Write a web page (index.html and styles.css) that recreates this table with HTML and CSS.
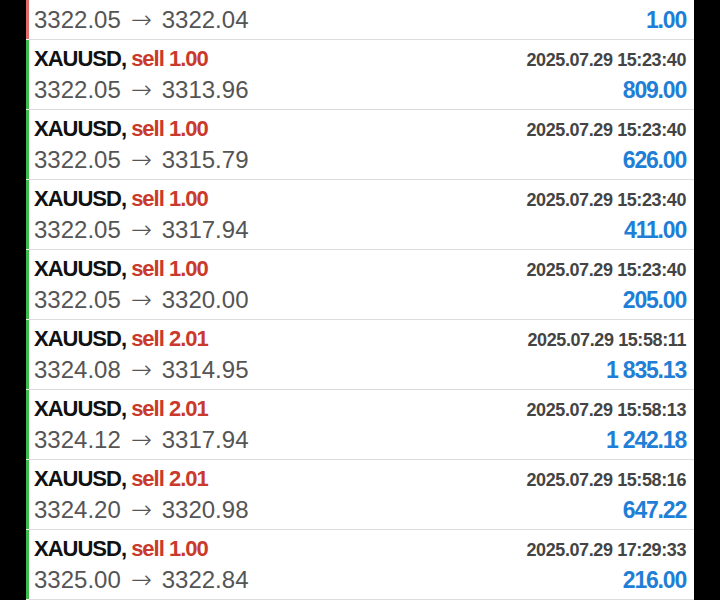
FILE: index.html
```html
<!DOCTYPE html>
<html>
<head>
<meta charset="utf-8">
<link rel="stylesheet" href="styles.css">
</head>
<body>
<div class="list">
  <div class="row partial">
    <div class="bar loss"></div>
    <div class="content">
      <div class="line">
        <span class="prices">3322.05<span class="arrow">→</span>3322.04</span>
        <span class="profit">1.00</span>
      </div>
    </div>
  </div>
  <div class="row">
    <div class="bar win"></div>
    <div class="content">
      <div class="line"><span class="title">XAUUSD, <span class="sell">sell 1.00</span></span><span class="time">2025.07.29 15:23:40</span></div>
      <div class="line"><span class="prices">3322.05<span class="arrow">→</span>3313.96</span><span class="profit">809.00</span></div>
    </div>
  </div>
  <div class="row">
    <div class="bar win"></div>
    <div class="content">
      <div class="line"><span class="title">XAUUSD, <span class="sell">sell 1.00</span></span><span class="time">2025.07.29 15:23:40</span></div>
      <div class="line"><span class="prices">3322.05<span class="arrow">→</span>3315.79</span><span class="profit">626.00</span></div>
    </div>
  </div>
  <div class="row">
    <div class="bar win"></div>
    <div class="content">
      <div class="line"><span class="title">XAUUSD, <span class="sell">sell 1.00</span></span><span class="time">2025.07.29 15:23:40</span></div>
      <div class="line"><span class="prices">3322.05<span class="arrow">→</span>3317.94</span><span class="profit">411.00</span></div>
    </div>
  </div>
  <div class="row">
    <div class="bar win"></div>
    <div class="content">
      <div class="line"><span class="title">XAUUSD, <span class="sell">sell 1.00</span></span><span class="time">2025.07.29 15:23:40</span></div>
      <div class="line"><span class="prices">3322.05<span class="arrow">→</span>3320.00</span><span class="profit">205.00</span></div>
    </div>
  </div>
  <div class="row">
    <div class="bar win"></div>
    <div class="content">
      <div class="line"><span class="title">XAUUSD, <span class="sell">sell 2.01</span></span><span class="time">2025.07.29 15:58:11</span></div>
      <div class="line"><span class="prices">3324.08<span class="arrow">→</span>3314.95</span><span class="profit">1 835.13</span></div>
    </div>
  </div>
  <div class="row">
    <div class="bar win"></div>
    <div class="content">
      <div class="line"><span class="title">XAUUSD, <span class="sell">sell 2.01</span></span><span class="time">2025.07.29 15:58:13</span></div>
      <div class="line"><span class="prices">3324.12<span class="arrow">→</span>3317.94</span><span class="profit">1 242.18</span></div>
    </div>
  </div>
  <div class="row">
    <div class="bar win"></div>
    <div class="content">
      <div class="line"><span class="title">XAUUSD, <span class="sell">sell 2.01</span></span><span class="time">2025.07.29 15:58:16</span></div>
      <div class="line"><span class="prices">3324.20<span class="arrow">→</span>3320.98</span><span class="profit">647.22</span></div>
    </div>
  </div>
  <div class="row">
    <div class="bar win"></div>
    <div class="content">
      <div class="line"><span class="title">XAUUSD, <span class="sell">sell 1.00</span></span><span class="time">2025.07.29 17:29:33</span></div>
      <div class="line"><span class="prices">3325.00<span class="arrow">→</span>3322.84</span><span class="profit">216.00</span></div>
    </div>
  </div>
</div>
</body>
</html>
```
FILE: styles.css
```css
html, body {
  margin: 0;
  padding: 0;
  background: #000;
  height: 600px;
  overflow: hidden;
}
.list {
  margin-left: 26px;
  width: 668px;
  background: #fff;
  height: 600px;
  font-family: "Liberation Sans", Arial, sans-serif;
}
.row {
  display: flex;
  height: 70px;
}
.row.partial {
  height: 40px;
}
.bar {
  width: 3px;
  flex: none;
  margin-bottom: 1px;
}
.bar.win { background: #3dba4b; }
.bar.loss { background: #de6b66; }
.content {
  flex: 1;
  border-bottom: 1px solid #dcdcdc;
  padding: 4px 8px 0 5px;
  display: flex;
  flex-direction: column;
}
.row.partial .content {
  padding-top: 5px;
}
.line {
  display: flex;
  justify-content: space-between;
  align-items: baseline;
  height: 30px;
  line-height: 30px;
}
.line + .line {
  margin-top: 1px;
}
.title {
  font-weight: 700;
  font-size: 22px;
  color: #111;
  letter-spacing: -1px;
}
.sell {
  color: #c9392c;
}
.time {
  font-weight: 700;
  font-size: 18px;
  color: #444;
  letter-spacing: -0.4px;
}
.prices {
  font-size: 24px;
  color: #555;
}
.arrow {
  display: inline-block;
  font-family: "DejaVu Sans", sans-serif;
  font-size: 25px;
  font-weight: 300;
  padding: 0 10px;
  line-height: 1;
}
.profit {
  font-weight: 700;
  font-size: 23px;
  color: #1f7ed6;
  letter-spacing: -1.2px;
}
```
